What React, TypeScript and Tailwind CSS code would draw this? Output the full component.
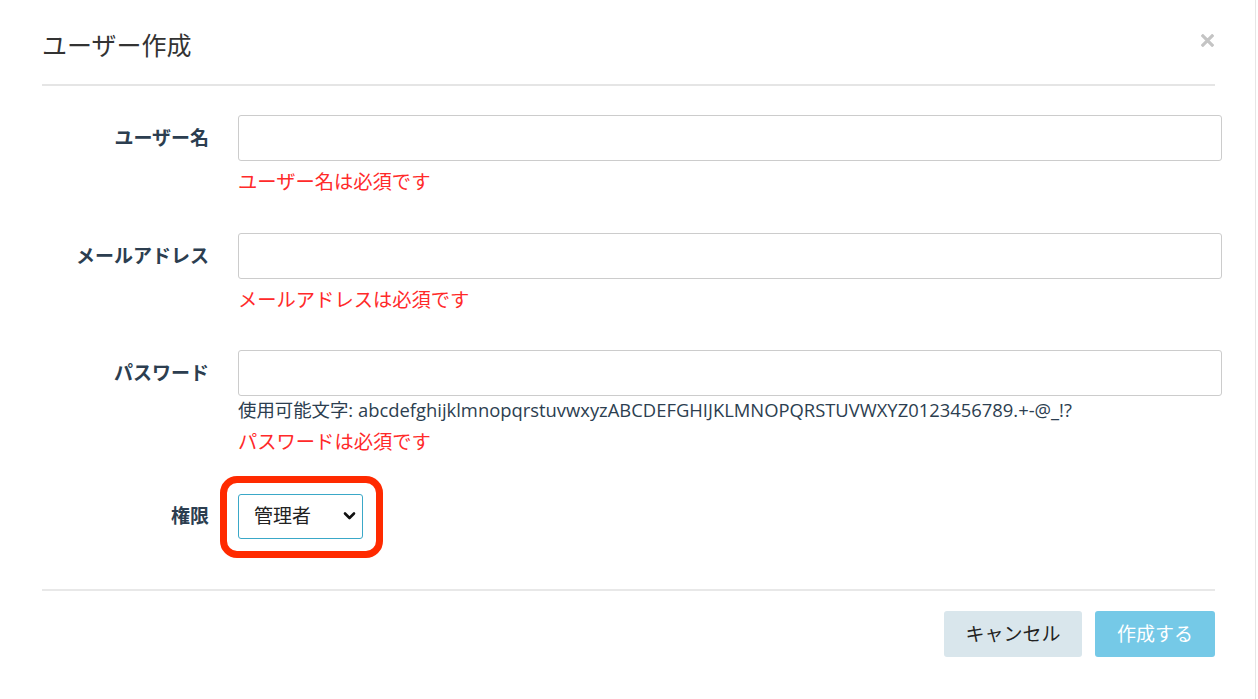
import { useState } from 'react';

const FONT = '"Open Sans", "Noto Sans CJK JP", sans-serif';

function Field({
  label,
  error,
  hint,
  type = 'text',
}: {
  label: string;
  error: string;
  hint?: string;
  type?: string;
}) {
  return (
    <div className="flex">
      <div className="flex h-[46px] w-[196px] shrink-0 items-center justify-end pr-[29px] text-[19px] font-bold text-[#2c3e50]">
        {label}
      </div>
      <div className="flex w-[984px] flex-col">
        <input
          type={type}
          className="h-[46px] w-full rounded-[3px] border border-[#cccccc] bg-white px-3 text-[18px] outline-none"
        />
        {hint && (
          <div className="mt-[2px] text-[18.4px] leading-[24px] text-[#2c3e50]">{hint}</div>
        )}
        <div className={`${hint ? 'mt-[7px]' : 'mt-[8px]'} text-[19.3px] leading-[26px] text-[#ff2a2a]`}>
          {error}
        </div>
      </div>
    </div>
  );
}

export default function App() {
  const [role, setRole] = useState('admin');

  return (
    <div className="flex h-[699px] w-full bg-white" style={{ fontFamily: FONT }}>
      <div className="flex h-full w-[1256px] shrink-0 flex-col border-r border-[#e6e6e6]">
        {/* Header */}
        <div className="flex h-[84px] items-start justify-between pl-[42px] pr-[41px] pt-[30px]">
          <h1 className="text-[25px] leading-[30px] text-[#333333]">ユーザー作成</h1>
          <button type="button" className="mt-[4px] text-[#c4c4c4]">
            <svg width="13" height="13" viewBox="0 0 14 14">
              <path d="M2 2 L12 12 M12 2 L2 12" stroke="currentColor" strokeWidth="3.4" strokeLinecap="square" />
            </svg>
          </button>
        </div>
        <div className="ml-[42px] h-[2px] w-[1173px] bg-[#e5e5e5]" />

        {/* Body */}
        <div className="flex flex-col pl-[42px] pt-[29px]">
          <Field label="ユーザー名" error="ユーザー名は必須です" />
          <div className="h-[38px]" />
          <Field label="メールアドレス" error="メールアドレスは必須です" />
          <div className="h-[37px]" />
          <Field
            label="パスワード"
            type="password"
            hint="使用可能文字: abcdefghijklmnopqrstuvwxyzABCDEFGHIJKLMNOPQRSTUVWXYZ0123456789.+-@_!?"
            error="パスワードは必須です"
          />
          <div className="h-[39px]" />
          <div className="flex">
            <div className="flex h-[45px] w-[196px] shrink-0 items-center justify-end pr-[29px] text-[19px] font-bold text-[#2c3e50]">
              権限
            </div>
            <div className="relative">
              <div className="pointer-events-none absolute -left-[18px] -right-[20px] -top-[18px] -bottom-[19px] rounded-[17px] border-[7px] border-[#ff2a00]" />
              <div className="relative h-[45px] w-[125px]">
                <select
                  value={role}
                  onChange={(e) => setRole(e.target.value)}
                  className="h-full w-full appearance-none rounded-[3px] border border-[#3aa8c8] bg-white pl-[15px] text-[19px] text-[#222222] outline-none"
                >
                  <option value="admin">管理者</option>
                  <option value="user">一般</option>
                </select>
                <svg
                  className="pointer-events-none absolute right-[7px] top-[17px]"
                  width="13"
                  height="10"
                  viewBox="0 0 13 10"
                >
                  <path d="M2 2.5 L6.5 7 L11 2.5" fill="none" stroke="#111111" strokeWidth="2.6" strokeLinecap="round" strokeLinejoin="round" />
                </svg>
              </div>
            </div>
          </div>
        </div>

        {/* Footer */}
        <div className="ml-[42px] mt-[50px] h-[2px] w-[1173px] bg-[#e8e8e8]" />
        <div className="flex w-[1215px] justify-end gap-[13px] pt-[20px]">
          <button
            type="button"
            className="h-[46px] w-[138px] rounded-[3px] bg-[#d9e6ec] text-[19px] text-[#222222]"
          >
            キャンセル
          </button>
          <button
            type="button"
            className="h-[46px] w-[120px] rounded-[3px] bg-[#75c9e7] text-[19px] text-white"
          >
            作成する
          </button>
        </div>
      </div>
    </div>
  );
}
